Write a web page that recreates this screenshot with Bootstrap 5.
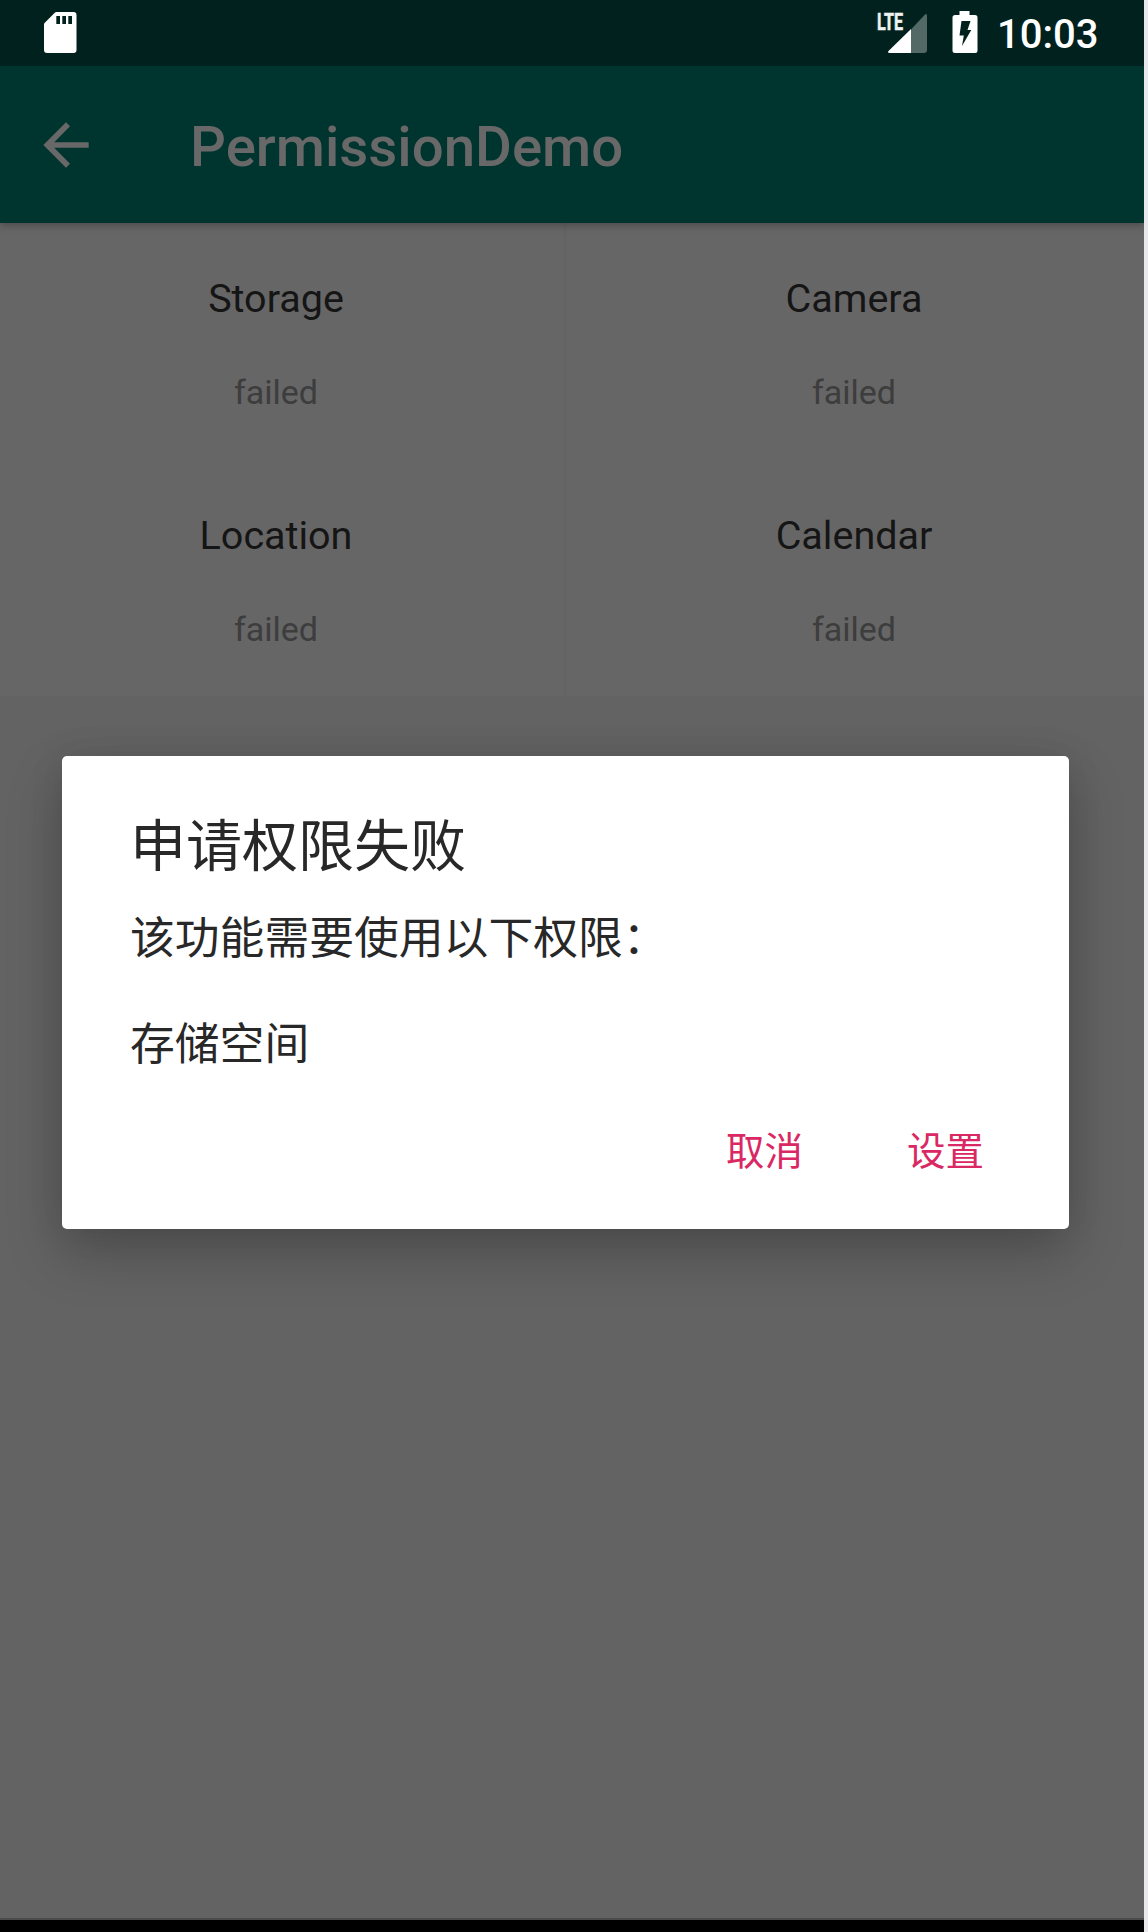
<!DOCTYPE html>
<html lang="zh-CN">
<head>
<meta charset="utf-8">
<meta name="viewport" content="width=device-width, initial-scale=1">
<title>PermissionDemo</title>
<link href="https://cdn.jsdelivr.net/npm/bootstrap@5.3.0/dist/css/bootstrap.min.css" rel="stylesheet">
<style>
  body { background: #e9e9ed; font-family: Roboto, "Noto Sans CJK SC", sans-serif; overflow: hidden; }
  .phone { width: 1144px; height: 1932px; background: #636363; overflow: hidden; }
  .status-bar { height: 66px; background: #00211d; padding: 0 47px 0 44px; color: #fff; z-index: 2; }
  .clock { font-size: 40px; line-height: 66px; font-weight: 500; width: 97px; white-space: nowrap; padding-top: 2px; margin-left: -3px; margin-right: 3px; }
  .status-bar svg, .app-bar svg { display: block; flex: none; }
  .app-bar { height: 157px; background: #00352f; color: #686868; padding: 0 0 0 32px; box-shadow: 0 2px 8px rgba(0,0,0,.3); z-index: 1; }
  .app-title { font-size: 56.4px; font-weight: 500; line-height: 66px; margin: 4px 0 0 90px; }
  .perm-grid { height: 473px; background: #666; }
  .perm-cell { height: 236.5px; padding-top: 50px; }
  .cell-start { width: 567px; padding-right: 11px; border-right: 4px solid #646464; }
  .cell-end { width: 577px; padding-right: 3px; }
  .perm-name { font-size: 39.5px; line-height: 52px; color: #151515; }
  .perm-state { font-size: 34px; line-height: 40px; color: #3d3d3d; margin-top: 47px; }
  .dialog-box { left: 62px; top: 756px; width: 1007px; height: 472.5px; border-radius: 5px; background: #fff; color: #282828;
    padding: 0 85px 0 68px; box-shadow: 0 24px 56px rgba(0,0,0,.23), 0 0 36px rgba(0,0,0,.08); z-index: 2; font-family: "Noto Sans CJK SC", sans-serif; }
  .dialog-title { font-size: 56px; line-height: 66px; margin: 53px 0 0; font-weight: 400; }
  .dialog-text { font-size: 44.8px; line-height: 53px; margin: 33px 0 0; }
  .dialog-actions { gap: 104px; margin-top: 57px; }
  .btn-flat { font-size: 38.5px; line-height: 48px; color: #da2864; padding: 0; border: 0; border-radius: 0; }
  .nav-strip { height: 14px; background: #000; border-top: 2px solid #4c4c4c; }
</style>
<script src="https://cdn.jsdelivr.net/npm/bootstrap@5.3.0/dist/js/bootstrap.bundle.min.js"></script>
</head>
<body>
<div class="phone position-relative d-flex flex-column">
  <div class="status-bar position-relative d-flex justify-content-between">
    <svg width="34" height="66" viewBox="0 0 34 66" aria-hidden="true">
      <path fill="#fff" fill-rule="evenodd" d="M12.500 12H29.500Q32.500 12 32.500 15V50Q32.500 53 29.500 53H3Q0 53 0 50V24.500Q0 23.500 .8 22.700L10.500 13Q11.400 12 12.500 12ZM12.300 16V24H16V16ZM18.300 16V24H22V16ZM24.300 16V24H28V16Z"/>
    </svg>
    <div class="d-flex">
      <svg width="52" height="66" viewBox="0 0 52 66" aria-hidden="true">
        <path fill="#536966" d="M34 29.500L47.500 15Q50 12.500 50 16V50Q50 53 47 53H34Z"/>
        <path fill="#fff" d="M34 29V53H13Q9.500 53 12 50.500Z"/>
        <text x="0" y="29.800" font-family="Roboto" font-size="24" font-weight="700" fill="#eef2f1" stroke="#eef2f1" stroke-width=".6" textLength="26" lengthAdjust="spacingAndGlyphs">LTE</text>
      </svg>
      <svg width="71" height="66" viewBox="0 0 71 66" aria-hidden="true">
        <path fill="#fff" d="M30.500 11H40.500V15H46Q48.500 15 48.500 17.500V50.500Q48.500 53 46 53H26Q23.500 53 23.500 50.500V17.500Q23.500 15 26 15H30.500Z"/>
        <path fill="#00211d" d="M32.500 21H41.500L38.500 30H42.300L33 46L34.800 35.500H30.500Z"/>
      </svg>
      <div class="clock">10:03</div>
    </div>
  </div>

  <header class="app-bar d-flex align-items-center position-relative">
    <svg width="68" height="68" viewBox="0 0 24 24" aria-hidden="true">
      <path fill="#686868" d="M20 11H7.830L13.420 5.410L12 4L4 12L12 20L13.410 18.590L7.830 13H20Z"/>
    </svg>
    <h1 class="app-title">PermissionDemo</h1>
  </header>

  <main class="perm-grid d-flex flex-wrap text-center">
    <div class="perm-cell cell-start"><div class="perm-name">Storage</div><div class="perm-state">failed</div></div>
    <div class="perm-cell cell-end"><div class="perm-name">Camera</div><div class="perm-state">failed</div></div>
    <div class="perm-cell cell-start"><div class="perm-name">Location</div><div class="perm-state">failed</div></div>
    <div class="perm-cell cell-end"><div class="perm-name">Calendar</div><div class="perm-state">failed</div></div>
  </main>

  <div class="nav-strip mt-auto"></div>

  <section class="dialog-box position-absolute d-flex flex-column" role="dialog" aria-labelledby="dialogTitle">
    <h2 class="dialog-title" id="dialogTitle">申请权限失败</h2>
    <p class="dialog-text">该功能需要使用以下权限：<br><br>存储空间</p>
    <div class="dialog-actions d-flex justify-content-end">
      <button type="button" class="btn btn-flat">取消</button>
      <button type="button" class="btn btn-flat">设置</button>
    </div>
  </section>
</div>
</body>
</html>
